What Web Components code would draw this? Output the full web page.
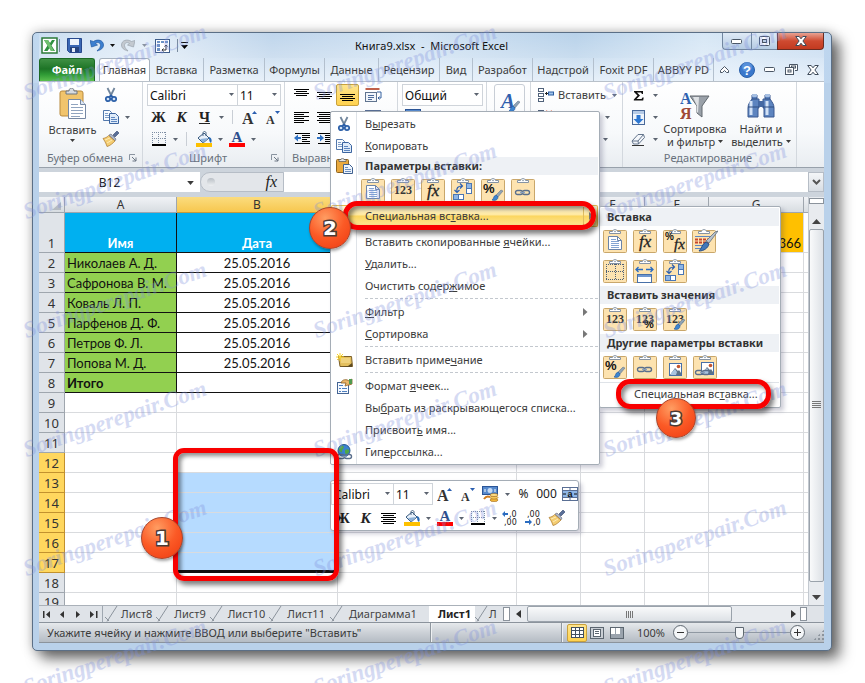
<!DOCTYPE html>
<html lang="ru">
<head>
<meta charset="utf-8">
<title>Книга9.xlsx - Microsoft Excel</title>
<style>
html{background:#fff}
body{margin:0;padding:32px 33px 32px 32px;position:relative;overflow:hidden;font:11px/16px "Noto Sans","Open Sans",sans-serif;color:#3b3b3b}
#menu{position:absolute;left:330px;top:111px;width:270px}
#paste{position:absolute;left:599px;top:206px;width:182px}
#mini{position:absolute;left:330px;top:480px;width:249px}
xl-watermark{position:absolute;inset:0}
xl-callout,xl-badge{position:absolute}
#c1{left:173px;top:448px;width:166px;height:133px}
#c2{left:343px;top:201px;width:253px;height:29px}
#c3{left:616px;top:379px;width:155px;height:30px}
#b1{left:141px;top:517px}
#b2{left:309px;top:207px}
#b3{left:656px;top:398px}
</style>
</head>
<body>
<xl-window>
  <xl-titlebar></xl-titlebar>
  <xl-tabs></xl-tabs>
  <xl-ribbon></xl-ribbon>
  <xl-formula></xl-formula>
  <xl-sheet></xl-sheet>
  <xl-sheetbar></xl-sheetbar>
  <xl-status></xl-status>
</xl-window>

<xl-mini id="mini"></xl-mini>

<xl-menu id="menu">
  <xl-item icon="cut">В<u>ы</u>резать</xl-item>
  <xl-item icon="copy"><u>К</u>опировать</xl-item>
  <xl-heading icon="paste16">Параметры вставки:</xl-heading>
  <xl-gallery gutter icons="page n123 fx transpose pctbrush chain"></xl-gallery>
  <xl-item hot arrow>Специальная вс<u>т</u>авка...</xl-item>
  <xl-rule blank></xl-rule>
  <xl-item>Вставить скопированные <u>я</u>чейки...</xl-item>
  <xl-item><u>У</u>далить...</xl-item>
  <xl-item>Очистить содер<u>ж</u>имое</xl-item>
  <xl-rule></xl-rule>
  <xl-item arrow><u>Ф</u>ильтр</xl-item>
  <xl-item arrow><u>С</u>ортировка</xl-item>
  <xl-rule></xl-rule>
  <xl-item icon="note">Вставить приме<u>ч</u>ание</xl-item>
  <xl-rule></xl-rule>
  <xl-item icon="format">Формат <u>я</u>чеек...</xl-item>
  <xl-item>Вы<u>б</u>рать из раскрывающегося списка...</xl-item>
  <xl-item>Присвоит<u>ь</u> имя...</xl-item>
  <xl-item icon="globe">Гип<u>е</u>рссылка...</xl-item>
</xl-menu>

<xl-menu id="paste" flat>
  <xl-heading flat>Вставка</xl-heading>
  <xl-gallery icons="page fx pctfx source"></xl-gallery>
  <xl-gallery icons="noborder colwidth transpose"></xl-gallery>
  <xl-heading flat>Вставить значения</xl-heading>
  <xl-gallery icons="n123 n123pct n123brush"></xl-gallery>
  <xl-heading flat>Другие параметры вставки</xl-heading>
  <xl-gallery icons="pctbrush chain pic linkpic"></xl-gallery>
  <xl-rule line></xl-rule>
  <xl-item>Специальная вс<u>т</u>авка...</xl-item>
</xl-menu>

<xl-watermark></xl-watermark>
<xl-callout id="c1" round="10"></xl-callout>
<xl-callout id="c2"></xl-callout>
<xl-callout id="c3"></xl-callout>
<xl-badge id="b1">1</xl-badge>
<xl-badge id="b2">2</xl-badge>
<xl-badge id="b3" small>3</xl-badge>

<script>
const svg=(w,h,body)=>`<svg width="${w}" height="${h}" viewBox="0 0 ${w} ${h}" aria-hidden="true">${body}</svg>`;
const lines=(rows,c='#000')=>rows.map(([x,y,w])=>`<rect x="${x}" y="${y}" width="${w}" height="1" fill="${c}" shape-rendering="crispEdges"/>`).join('');
const brush=(x,y)=>`<g transform="translate(${x} ${y})"><path d="M9 0l2 1-5 6-2-2z" fill="#8fa3b5" stroke="#5b6d80" stroke-width=".5"/><path d="M4 5l2 2c0 3-3 4-6 3 2-1 1-4 4-5z" fill="#3d85d0" stroke="#1d559d" stroke-width=".6"/></g>`;
const chain=(x,y)=>`<g transform="translate(${x} ${y})" fill="none"><rect x=".5" y=".5" width="7" height="4" rx="2" stroke="#5a6f8c" stroke-width="1.4"/><rect x="7.500" y=".5" width="7" height="4" rx="2" stroke="#5a6f8c" stroke-width="1.4"/><path d="M5 2.500h5" stroke="#8aa0bd" stroke-width="1.4"/></g>`;
const tile=b=>svg(24,24,`<rect x=".5" y="1.500" width="23" height="22" rx="1" fill="#fde3b0" stroke="#c9a76b"/><path d="M6.500 4.500v-2h3c0-2.500 5-2.500 5 0h3v2z" fill="#fff" stroke="#8593a3"/><circle cx="12" cy="2.500" r=".8" fill="#8593a3"/>${b}`);
const ser='font-family="Liberation Serif"',n123=`<text x="12" y="16" ${ser} font-weight="bold" font-size="12" text-anchor="middle" fill="#383838">123</text>`;
const fxt=(x,y,s)=>`<text x="${x}" y="${y}" ${ser} font-style="italic" font-size="${s}" fill="#222" stroke="#222" stroke-width=".3">fx</text>`;
const pct=(x,y,s=11)=>`<text x="${x}" y="${y}" font-family="Liberation Sans" font-weight="bold" font-size="${s}" fill="#111">%</text>`;
const pic=(x,y)=>`<g transform="translate(${x} ${y})"><rect x=".5" y=".5" width="12" height="12" fill="#fff" stroke="#4770a8"/><path d="M1 12l5-7 3 3 1-1 2 3v2z" fill="#5d7286"/><path d="M2 10l4-4 2 3-1 3H2z" fill="#a9c4e0"/><circle cx="9.500" cy="3.500" r="1.800" fill="#c4552d"/></g>`;
const bucket=`<path d="M2 7l6-5 5 5-6 5z" fill="#e9f1fa" stroke="#34587e"/><path d="M4 8l8-1-5 5z" fill="#8bb0d8"/><path d="M7 5V2c0-2 3-2 3 0v3" fill="none" stroke="#4a6785"/><path d="M13 6c3 1 3 4 2 6-2-1-2-4-2-6z" fill="#2869b4"/>`;
const I={
excel:svg(17,17,`<rect x="1" y="1" width="15" height="15" fill="#fff" stroke="#2b7a37" stroke-width="1.500"/><path d="M3 3h4l2 3 2-3h3L10.500 8.500 14 14h-4l-1.500-3-2 3H3l3.500-5.500z" fill="#2f9140"/><path d="M3 3h4l6 11h-3z" fill="#6fc06f"/>`),
save:svg(15,15,`<path d="M.5.5h14v14h-12l-2-2z" fill="#3a67b4" stroke="#27488c"/><rect x="3" y="1" width="9" height="6" fill="#eef4fc"/><rect x="3" y="9" width="9" height="5" fill="#26447f"/><rect x="5" y="10" width="3" height="4" fill="#e4ebf6"/>`),
undo:svg(14,13,`<path d="M0 1.500l1.500 6.500 6-2-2-1.500C8 2.500 10.500 4 10.500 6.500S8 10.500 7 12c4-1 6.500-3 6.500-6C13.500 1.500 8-.5 3.500 2.500z" fill="#3c7fd0" stroke="#2459a0" stroke-width=".7"/>`),
redo:svg(14,13,`<path d="M14 1.500l-1.500 6.500-6-2 2-1.500C6 2.500 3.500 4 3.500 6.500S6 10.500 7 12C3 11 .5 9 .5 6 .5 1.500 6-.5 10.500 2.500z" fill="#c3c9d0" stroke="#9aa4ae" stroke-width=".7"/>`),
pivot:svg(15,14,`<rect x=".5" y=".5" width="14" height="13" fill="#fff" stroke="#3e5c8a"/><path d="M2 2h3v2H2zM6 2h3v2H6zM10 2h3v2h-3zM2 5h3v3H2zM2 9h3v3H2z" fill="#6d92c6"/><path d="M7 11h4V6M9.500 7.500L11 6l1.500 1.500M8.500 9.500L7 11l1.500 1.500" fill="none" stroke="#333"/>`),
cut:svg(16,16,`<path d="M4.500 1l4 8M11.500 1l-4 8" stroke="#70859c" stroke-width="1.800"/><circle cx="5" cy="12" r="2.200" fill="#d3e4f7" stroke="#2b5fa8" stroke-width="1.700"/><circle cx="11" cy="12" r="2.200" fill="#d3e4f7" stroke="#2b5fa8" stroke-width="1.700"/><path d="M8 8l-2 2.500M8 8l2 2.500" stroke="#2b5fa8" stroke-width="1.600"/>`),
copy:svg(16,14,`<path d="M.5.5h6l2 2v8h-8z" fill="#f7fbff" stroke="#5378ac"/><path d="M2 3.500h3M2 5.500h5M2 7.500h5" stroke="#7e9dc8"/><path d="M6.500 3.500h6l3 3v7h-9z" fill="#dfebf9" stroke="#3c65a0"/><path d="M8 7.500h4M8 9.500h6M8 11.500h6" stroke="#5d86c0"/>`),
brush:svg(17,16,`<path d="M11 4l4-4 2 2-4 4z" fill="#5a6f97" stroke="#32466e" stroke-width=".6"/><path d="M7 4l2-1 5 5-1 2z" fill="#aab6c8" stroke="#667" stroke-width=".6"/><path d="M6.500 4.500L13 10c-2 2-5 5-8 5.500C4 12 2 9 1 7.500c2-.5 4-1 5.500-3z" fill="#f4cd71" stroke="#a9772c" stroke-width=".7"/><path d="M3 9l5-2M5 12l5-3" stroke="#fdeab6"/>`),
paste:svg(28,32,`<rect x="1" y="3" width="23" height="25" rx="2" fill="#f1c46c" stroke="#b98a3c"/><path d="M7 6V3h3c0-4 5-4 5 0h3v3z" fill="#d7dbe0" stroke="#6d757f"/><path d="M9.500 11.500h12l5 5v14h-17z" fill="#fff" stroke="#7688a3"/><path d="M21.500 11.500v5h5" fill="#dce6f3" stroke="#7688a3"/><path d="M12 16.500h7M12 19.500h12M12 22.500h12M12 25.500h12M12 28.500h9" stroke="#90a4bf"/>`),
paste16:svg(17,16,`<rect x=".5" y="1.500" width="12" height="13" rx="1" fill="#e9a93e" stroke="#8e6420"/><path d="M3 3.500h7v-2H8c0-1.500-3-1.500-3 0H3z" fill="#e3e3e3" stroke="#555" stroke-width=".7"/><path d="M7.500 6.500h6l3 3v6h-9z" fill="#eef4fc" stroke="#40618f"/><path d="M9 9.500h3M9 11.500h6M9 13.500h6" stroke="#6c8fc0"/>`),
border:svg(14,14,`<path d="M0 .5h14M0 6.500h14M.5 0v13M6.500 0v13M13.500 0v13" stroke="#7d8da3" stroke-dasharray="1 1" fill="none"/><path d="M0 13h14" stroke="#000" stroke-width="2"/>`),
fill:svg(16,16,`${bucket}<rect y="12" width="16" height="4" fill="#fdc000"/>`),
color:svg(16,16,`<text x="8" y="11" ${ser} font-weight="bold" font-size="15" text-anchor="middle" fill="#2d4f8e">A</text><rect y="12" width="16" height="4" fill="#f00"/>`),
big:svg(15,15,`<text x="0" y="14" ${ser} font-weight="bold" font-size="16" fill="#333">A</text><path d="M10 4l2.500-3L15 4z" fill="#2b5fb0"/>`),
small:svg(15,15,`<text x="1" y="14" ${ser} font-weight="bold" font-size="12" fill="#333">A</text><path d="M10 1h5l-2.500 3z" fill="#2b5fb0"/>`),
alTop:svg(15,14,lines([[0,1,15],[2,3,11],[0,5,15],[2,7,11]])),
alMid:svg(15,14,lines([[0,4,15],[2,6,11],[0,8,15],[2,10,11]])),
alBot:svg(15,14,lines([[0,6,15],[2,8,11],[0,10,15],[2,12,11]])),
alLeft:svg(15,14,lines([[0,2,15],[0,4,10],[0,6,15],[0,8,10],[0,10,15],[0,12,10]])),
alCen:svg(15,14,lines([[0,2,15],[2,4,11],[0,6,15],[2,8,11],[0,10,15],[2,12,11]])),
inL:svg(16,14,lines([[1,1,15],[8,3,8],[8,5,8],[8,7,5],[8,9,8],[1,11,15]])+`<path d="M0 6l4-3.500V5h3v2H4v2.500z" fill="#3173c4"/>`),
inR:svg(16,14,lines([[1,1,15],[8,3,8],[8,5,8],[8,7,5],[8,9,8],[1,11,15]])+`<path d="M7 6L3 2.500V5H0v2h3v2.500z" fill="#3173c4"/>`),
wrap:svg(17,16,`<rect x=".5" y="1" width="14" height="2" fill="#c0604a"/><rect x=".5" y="5.500" width="11" height="9" fill="#f1f5fa" stroke="#60748f"/><path d="M3 8.500h6M3 10.500h6M3 12.500h4" stroke="#4d6c9b"/><path d="M12 5h4v6h-3M14.500 9.500L13 11l1.500 1.500" fill="none" stroke="#34619f"/>`),
merge:svg(16,14,`<rect x=".5" y=".5" width="15" height="13" fill="#fff" stroke="#5a6f94"/><rect x="1" y="4" width="14" height="6" fill="#8db5e6"/><path d="M.5 3.500h15M.5 10.500h15M8 0v3.500M8 10.500V14" stroke="#5a6f94"/><text x="8" y="10" text-anchor="middle" font-family="Liberation Sans" font-weight="bold" font-size="9" fill="#111">a</text><path d="M1 7h3M12 7h3" stroke="#111"/>`),
money:svg(17,16,`<rect x=".5" y=".5" width="15" height="8" fill="#5689cc" stroke="#2b5597"/><circle cx="8" cy="4.500" r="2.500" fill="#c3daf6"/><path d="M3 3v3M13 3v3" stroke="#fff"/><ellipse cx="12" cy="14" rx="4" ry="1.600" fill="#f5b93c" stroke="#9c6416" stroke-width=".6"/><ellipse cx="12" cy="11.500" rx="4" ry="1.600" fill="#f8c85a" stroke="#9c6416" stroke-width=".6"/><ellipse cx="12" cy="9" rx="4" ry="1.600" fill="#fddb83" stroke="#9c6416" stroke-width=".6"/><path d="M2 13c2-3 4-3 6-2" stroke="#cf7b1e" stroke-width="2" fill="none"/>`),
styles:svg(20,22,`<text x="1" y="18" ${ser} font-style="italic" font-weight="bold" font-size="21" fill="#2f5fae">A</text>${brush(9,11)}`),
insert:svg(16,14,`<rect x=".5" y=".5" width="5" height="3" fill="#fff" stroke="#50627a"/><rect x=".5" y="5.500" width="5" height="3" fill="#fff" stroke="#50627a"/><rect x=".5" y="10.500" width="5" height="3" fill="#fff" stroke="#50627a"/><path d="M7 5.500h3M8.500 4v3" stroke="#222"/><rect x="10.500" y="4" width="5" height="3" fill="#9fc3ea" stroke="#2a5da0"/>`),
del:svg(16,14,`<rect x=".5" y=".5" width="5" height="3" fill="#fff" stroke="#50627a"/><rect x=".5" y="5.500" width="5" height="3" fill="#fff" stroke="#50627a"/><path d="M8 1l6 6M14 1L8 7" stroke="#d9542b" stroke-width="2"/>`),
sigma:svg(12,11,`<path d="M1 1h9v3H9L8 2.500H4L7 5.500 3.500 9H8.500l1-1.500h1.200L10.200 10.500H.8v-1L4.500 5.600 1 2z" fill="#111"/>`),
down:svg(13,15,`<rect x=".5" y=".5" width="12" height="14" fill="#eef4fb" stroke="#49699a"/><rect x="1" y="1" width="11" height="3" fill="#b6cbe6"/><path d="M4.500 5h4v4h3l-5 5-5-5h3z" fill="#2d77d1"/>`),
eraser:svg(15,13,`<path d="M7 1.500h5.500l1 3-6 6.500H2.500L1 8z" fill="#f4f7fb" stroke="#64758c"/><path d="M1 8h6l.5 3M7 8l5.500-6.500" fill="none" stroke="#64758c"/><path d="M1 12.500h12" stroke="#333"/>`),
sort:svg(30,30,`<text x="0" y="13" ${ser} font-weight="bold" font-size="16" fill="#2f62b0">А</text><text x="0" y="28" ${ser} font-weight="bold" font-size="16" fill="#a04a37">Я</text><path d="M10 5h19l-7 10v11l-5-4v-7z" fill="#9aa1a9" stroke="#62696f"/><path d="M13 6h6l-1 16-1-1v-6z" fill="#dfe2e5"/>`),
find:svg(30,26,`<path d="M6 2h5v4h2v9h-1v9H2v-9c0-4 2-6 4-9zM24 2h-5v4h-2v9h1v9h10v-9c0-4-2-6-4-9z" fill="#5d84bf" stroke="#3a5890"/><rect x="12" y="8" width="6" height="6" fill="#4569a3"/><path d="M5 8v14M21 8v14" stroke="#d3e2f6" stroke-width="3"/><path d="M2 14h11M17 14h11M6 6h5M19 6h5" stroke="#2f4d80"/><rect x="6" y="1" width="5" height="3" rx="1" fill="#a6bfe2"/><rect x="19" y="1" width="5" height="3" rx="1" fill="#a6bfe2"/>`),
up:svg(11,9,`<path d="M1.500 7.500v-2l4-4 4 4v2h-2l-2-2-2 2z" fill="#fff" stroke="#4a5665"/>`),
help:svg(16,16,`<circle cx="8" cy="8" r="7.500" fill="#3a78cc" stroke="#2a5fa8"/><circle cx="8" cy="5" r="5" fill="#6aa0e4" opacity=".6"/><text x="8" y="12.500" text-anchor="middle" font-family="Liberation Sans" font-weight="bold" font-size="13" fill="#fff">?</text>`),
min:svg(12,5,`<rect x=".5" y=".5" width="10" height="4" rx="1" fill="#fff" stroke="#4a5665"/>`),
rest:svg(13,11,`<path d="M4.500 3V.5h8v6H10" fill="#fff" stroke="#4a5665"/><rect x="6.500" y="2" width="4" height="2" fill="none" stroke="#4a5665"/><rect x=".5" y="3.500" width="8" height="7" fill="#fff" stroke="#4a5665"/><rect x="3" y="6" width="3" height="2" fill="none" stroke="#4a5665"/>`),
x:svg(12,10,`<path d="M.7.500h3.500L6 2.800 7.800.5h3.500L7.900 5l3.400 4.500H7.800L6 7.200 4.200 9.500H.7L4.100 5z" fill="#fff" stroke="#3f4b5a"/>`),
max:svg(12,10,`<rect x=".5" y=".5" width="10" height="9" rx="1" fill="#fff" stroke="#445062"/><rect x="3.500" y="3.500" width="4" height="3" fill="#b9cce4" stroke="#445062"/>`),
note:svg(17,15,`<path d="M2.500 3.500h13l1 10H4z" fill="#e3bf5e" stroke="#7c6029"/><path d="M12 13l4-3v4H4z" fill="#5c4a22"/><path d="M4 0v8M0 4h8M1 1l6 6M7 1L1 7" stroke="#f9d32c"/><path d="M5 5h9v5H5z" fill="#efd27e"/>`),
format:svg(17,16,`<rect x="1.500" y="4.500" width="11" height="11" fill="#f7faff" stroke="#456594"/><path d="M3 7.500h4M3 10.500h2M6 10.500h5M3 13.500h2M6 13.500h5" stroke="#4d7fc0"/><path d="M5 5c1-4 6-4 8-2l3-2v5l-3 1c-2 0-3 1-4 1l1-3z" fill="#e9b56b" stroke="#8b5c1f" stroke-width=".8"/><path d="M13 1h3v5h-3z" fill="#4f9a4f"/>`),
globe:svg(17,16,`<circle cx="8" cy="6.500" r="6" fill="#3b82cf" stroke="#24588f"/><path d="M4 3c3-3 5 0 3 2s0 4-2 3-3-3-1-5zM9 6c3-2 5 0 4 2s-3 3-4 1z" fill="#4fa845"/>${chain(1,10)}`),
launch:svg(8,8,`<path d="M.5 6V.5H6" fill="none" stroke="#8a94a0"/><path d="M3 3l4 4M7 3.500V7H3.500" fill="none" stroke="#6c7784"/>`),
page:tile(`<path d="M5.500 7.500h9l4 4v9h-13z" fill="#fff" stroke="#6b84a8"/><path d="M14.500 7.500v4h4" fill="none" stroke="#6b84a8"/><path d="M8 10.500h5M8 12.500h8M8 14.500h8M8 16.500h8M8 18.500h8" stroke="#84a5d2"/>`),
n123:tile(n123),n123pct:tile(n123+pct(11,21,11)),n123brush:tile(n123+brush(11,12)),
fx:tile(fxt(6,18,17)),pctfx:tile(pct(2,11,10)+fxt(11,20,15)),
transpose:tile(`<rect x="15.500" y="5.500" width="5" height="5" fill="#8db5e6" stroke="#4a76b4"/><rect x="15.500" y="10.500" width="5" height="5" fill="#fff" stroke="#4a76b4"/><rect x="2.500" y="16.500" width="5" height="5" fill="#8db5e6" stroke="#4a76b4"/><rect x="7.500" y="16.500" width="5" height="5" fill="#fff" stroke="#4a76b4"/><path d="M6 14c-1-4 1-6 5-6M9 5.500L11.500 8 9 10.500M3.500 12L6 14.500 8.500 12" fill="none" stroke="#2b5fb0" stroke-width="1.200"/>`),
pctbrush:tile(pct(2,15,13)+brush(11,12)),
chain:tile(chain(4,12)),
source:svg(26,24,`<rect x=".5" y="1.500" width="23" height="22" rx="1" fill="#fde3b0" stroke="#c9a76b"/><path d="M6.500 4.500v-2h3c0-2.500 5-2.500 5 0h3v2z" fill="#fff" stroke="#8593a3"/><path d="M3 7.500h16M3 16.500h8M3 19.500h8" stroke="#5d86c0"/><path d="M3 10.500h16M3 13.500h14" stroke="#c7462b" stroke-width="2" stroke-dasharray="3 1"/><path d="M23 3l3-1-9 12-3-2z" fill="#b9c2cc" stroke="#5f6d7c" stroke-width=".8"/><path d="M14 13l3 2c-1 4-5 7-10 7 3-3 3-7 7-9z" fill="#4277b9" stroke="#274f86"/>`),
noborder:tile(`<path d="M3.500 5v15M12.500 5v15M20.500 5v15M3 5.500h18M3 12.500h18M3 20.500h18" stroke="#4d6078" stroke-dasharray="1 1" fill="none"/>`),
colwidth:tile(`<path d="M3 10.500h7M13 10.500h7M5.500 8L3 10.500 5.500 13M17.500 8l2.500 2.500-2.500 2.500" fill="none" stroke="#2b6cc0" stroke-width="1.300"/><rect x="4.500" y="15.500" width="14" height="8" fill="#fff" stroke="#4770a8"/><rect x="5" y="16" width="13" height="2" fill="#6e96cf"/>`),
pic:tile(pic(6,8)),linkpic:tile(pic(8,7)+chain(2,15)),
grid:svg(13,11,`<rect x=".5" y=".5" width="12" height="10" fill="#fff" stroke="#42505f"/><path d="M0 3.500h13M0 7.500h13M4.500 0v11M8.500 0v11" stroke="#42505f"/>`),
layout:svg(14,12,`<rect x=".5" y=".5" width="13" height="11" fill="#c9ced4" stroke="#5c6670"/><rect x="3.500" y="2.500" width="7" height="7" fill="#fff" stroke="#5c6670"/><path d="M5 4.500h4M5 6.500h4" stroke="#5c6670"/>`),
breaks:svg(14,12,`<rect x=".5" y=".5" width="13" height="11" fill="#9aa3ad" stroke="#5c6670"/><path d="M1 1h4v6H1zM6 1h4v6H6z" fill="#fff"/>`),
dec1:svg(17,16,`<text x="7" y="7" font-family="DejaVu Sans" font-size="8" fill="#222">,0</text><text x="2" y="15" font-family="DejaVu Sans" font-size="8" fill="#222">,00</text><path d="M0 4l3-3v2h3v2H3v2z" fill="#2b6cc0"/>`),
dec2:svg(17,16,`<text x="2" y="7" font-family="DejaVu Sans" font-size="8" fill="#222">,00</text><text x="8" y="15" font-family="DejaVu Sans" font-size="8" fill="#222">,0</text><path d="M7 12l-3-3v2H0v2h4v2z" fill="#2b6cc0"/>`)
};
const define=(name,html,init)=>{
  const t=document.createElement('template');t.innerHTML=html;
  customElements.define(name,class extends HTMLElement{
    constructor(){super();this.attachShadow({mode:'open'}).append(t.content.cloneNode(true))}
    connectedCallback(){if(init&&!this.ready){this.ready=true;init(this,this.shadowRoot)}}
  });
};
const arrow='<svg width="5" height="3" viewBox="0 0 5 3" aria-hidden="true"><path d="M0 0h5L2.500 3z" fill="currentColor"/></svg>';
const base=':host,*{box-sizing:border-box}button{font:inherit;color:inherit;background:none;border:0;padding:0;margin:0}svg{display:block;flex:none}';

define('xl-tool',`<style>${base}:host{display:flex;width:23px;height:22px}button{flex:1;display:grid;place-items:center;border-radius:2px}
:host([on]) button{background:linear-gradient(#ffe58c,#ffd24f);border:1px solid #c9a13b}
:host([drop]){width:10px;color:#5c6470}</style><button type="button"><slot></slot></button>`,(el,r)=>{
  const b=r.querySelector('button'),n=el.getAttribute('icon');
  if(el.getAttribute('label'))b.setAttribute('aria-label',el.getAttribute('label'));
  if(n)b.innerHTML=I[n];else if(el.hasAttribute('drop')){b.innerHTML=arrow;b.setAttribute('aria-label','Ещё')}});

define('xl-combo',`<style>${base}:host{display:block;position:relative;height:22px}
select{appearance:none;width:100%;height:100%;border:1px solid #cfd4da;border-left-width:var(--edge,1px);background:#fff;font:12px "Noto Sans",sans-serif;color:#111;padding:0 2px;border-radius:0}
svg{position:absolute;right:4px;top:9px;color:#5c6470}</style><select></select>${arrow}`,(el,r)=>{
  const s=r.querySelector('select');s.setAttribute('aria-label',el.getAttribute('label'));s.innerHTML='<option>'+el.getAttribute('value')+'</option>'});

define('xl-window',`<style>:host{display:block;box-sizing:border-box;border:1px solid #5b6f86;border-radius:5px;padding:0 7px 7px 6px;
background:#b9d1ea linear-gradient(90deg,#bfd7ee,#dce9f6 14%,#b4cee8 30%,#c8ddf1 48%,#accae6 68%,#d0e3f4 84%,#bdd5ee) 0 0/100% 50px no-repeat;
box-shadow:0 0 12px rgba(0,0,0,.25),8px 8px 14px rgba(0,0,0,.55)}</style><slot></slot>`);

define('xl-titlebar',`<style>${base}:host{display:flex;height:25px;align-items:center;background:linear-gradient(180deg,rgba(255,255,255,.15),rgba(255,255,255,.35))}
.q{display:flex;align-items:center;flex:1 1 0;color:#111}.q button{height:20px;display:grid;place-items:center}.s{width:1px;height:13px;background:#7a8b9f}
h1{margin:0;font:11px "Noto Sans",sans-serif;color:#111;white-space:pre}
.w{flex:1 1 0;display:flex;justify-content:flex-end;align-self:flex-start}
.w button{height:17px;display:grid;place-items:center;border:1px solid #71869f;border-top:0;background:linear-gradient(#dfeaf6,#b5cbe3)}
.w button:nth-child(1){width:29px;border-radius:0 0 0 4px;border-right:0}.w button:nth-child(2){width:26px;border-right:0}
.w .c{width:47px;background:linear-gradient(#e8a292,#cf4a30 50%,#c23a20);border-color:#6b2b20;border-radius:0 0 4px 0}
</style><div class="q"><button aria-label="Excel" style="width:20px">${I.excel}</button><span class="s"></span>
<button aria-label="Сохранить" style="width:29px">${I.save}</button><button aria-label="Отменить" style="width:16px">${I.undo}</button><button aria-label="Список отмены" style="width:14px">${arrow}</button>
<button aria-label="Вернуть" style="width:18px">${I.redo}</button><button aria-label="Список возврата" style="width:14px;color:#8a94a0">${arrow}</button><button aria-label="Сводная таблица" style="width:22px">${I.pivot}</button><span class="s" style="margin-left:4px"></span><button aria-label="Настройка панели" style="width:13px"><svg width="7" height="7" viewBox="0 0 7 7"><path d="M0 .5h7" stroke="#111"/><path d="M0 3h7L3.500 7z"/></svg></button></div>
<h1>Книга9.xlsx  -  Microsoft Excel</h1>
<div class="w"><button aria-label="Свернуть">${I.min}</button><button aria-label="Развернуть">${I.max}</button><button class="c" aria-label="Закрыть">${I.x}</button></div>`);

define('xl-tabs',`<style>${base}:host{display:grid;grid-template-columns:56px 4px 51px 54px 61px 60px 54px 61px 33px 60px 61px 60px 60px 1fr;height:23px;background:linear-gradient(rgba(240,246,252,.5),rgba(240,246,252,.85))}
button.t{overflow:hidden;white-space:nowrap;border-right:1px solid #b3c0ce;text-align:center}
button.f{background:linear-gradient(#3f9044,#1d7426 45%,#2f9a35 70%,#5abf4e);color:#fff;font-weight:bold;border:1px solid #1c6a25;border-bottom:0;border-radius:3px 3px 0 0}
button.a{background:#fff;border:1px solid #a7b2be;border-bottom:0;border-radius:3px 3px 0 0}
.r{display:flex;justify-content:flex-end;align-items:center;gap:9px;padding-right:5px}
</style><button class="f">Файл</button><i></i><button class="t a">Главная</button><button class="t">Вставка</button><button class="t">Разметка</button><button class="t">Формулы</button><button class="t">Данные</button><button class="t">Рецензир</button><button class="t">Вид</button><button class="t">Разработ</button><button class="t">Надстрой</button><button class="t">Foxit PDF</button><button class="t">ABBYY PD</button>
<div class="r"><button aria-label="Свернуть ленту">${I.up}</button><button aria-label="Справка">${I.help}</button><button aria-label="Свернуть книгу">${I.min}</button><button aria-label="Восстановить книгу">${I.rest}</button><button aria-label="Закрыть книгу">${I.x}</button></div>`);

define('xl-group',`<style>:host{box-sizing:border-box;display:grid;grid-template-rows:66px 16px;padding-top:2px;border-right:1px solid #d3d8de;overflow:hidden;flex:none}svg{display:block}
.c{display:flex;align-items:center;color:#68717c;white-space:nowrap;padding:0 5px 0 2px}.c span{flex:1;text-align:center}:host([start]) .c span{text-align:left;padding-left:5px}
</style><slot></slot><div class="c"><span></span></div>`,(el,r)=>{const c=r.querySelector('.c');c.firstChild.textContent=el.getAttribute('caption')||'';
  if(el.hasAttribute('launcher'))c.insertAdjacentHTML('beforeend',I.launch)});

define('xl-ribbon',`<style>${base}:host{display:flex;height:87px;background:linear-gradient(#fff,#f7f9fb 60%,#e9edf1);border-top:1px solid #b9c1ca;border-bottom:1px solid #98a1ab}
.b{display:flex}.rows{display:grid;grid-auto-rows:22px;align-content:start}.rows>div{display:flex;white-space:nowrap;align-items:center}
.big{display:grid;grid-template-rows:32px auto auto;justify-items:center;align-content:start;align-items:center;line-height:13px;row-gap:3px;padding-top:4px;white-space:nowrap;color:#3b3b3b}
.big.two{row-gap:0;padding-top:6px}.big span{display:flex;align-items:center;gap:3px}.i{width:12px;height:14px;background:linear-gradient(#c9ced5,#c9ced5) center/1px 100% no-repeat}
b{font:bold 15px "Liberation Serif",serif;color:#222}
.st{border:1px solid #c8ced6;border-radius:3px;width:31px;height:44px;margin-left:7px;display:grid;place-items:start center;padding-top:5px}
</style>
<xl-group caption="Буфер обмена" launcher style="width:104px"><div class="b" style="padding-left:7px"><button class="big" style="width:53px">${I.paste}<span>Вставить</span>${arrow}</button>
<div class="rows"><div><xl-tool icon="cut" label="Вырезать"></xl-tool></div><div><xl-tool icon="copy" label="Копировать"></xl-tool><xl-tool drop></xl-tool></div><div><xl-tool icon="brush" label="Формат по образцу"></xl-tool></div></div></div></xl-group>
<xl-group caption="Шрифт" launcher style="width:142px"><div class="rows" style="padding-left:4px"><div><xl-combo label="Шрифт" value="Calibri" style="width:91px"></xl-combo><xl-combo label="Размер" value="11" style="width:43px;--edge:0"></xl-combo></div>
<div><xl-tool><b>Ж</b></xl-tool><xl-tool><b style="font-style:italic">К</b></xl-tool><xl-tool><b style="text-decoration:underline">Ч</b></xl-tool><xl-tool drop></xl-tool><i class="i"></i><xl-tool icon="big" label="Увеличить размер"></xl-tool><xl-tool icon="small" label="Уменьшить размер"></xl-tool></div>
<div><xl-tool icon="border" label="Границы"></xl-tool><xl-tool drop></xl-tool><i class="i"></i><xl-tool icon="fill" label="Заливка"></xl-tool><xl-tool drop></xl-tool><xl-tool icon="color" label="Цвет текста"></xl-tool><xl-tool drop></xl-tool></div></div></xl-group>
<xl-group caption="Выравнивание" start style="width:113px"><div class="rows" style="padding-left:5px"><div><xl-tool icon="alTop" label="По верхнему краю"></xl-tool><xl-tool icon="alMid" label="По середине"></xl-tool><xl-tool on icon="alBot" label="По нижнему краю"></xl-tool><xl-tool icon="wrap" label="Перенос текста" style="width:28px"></xl-tool></div>
<div><xl-tool icon="alLeft" label="Слева"></xl-tool><xl-tool icon="alCen" label="По центру"></xl-tool><xl-tool icon="alCen" label="Справа"></xl-tool><xl-tool icon="merge" label="Объединить" style="width:28px"></xl-tool></div>
<div><xl-tool icon="inL" label="Уменьшить отступ"></xl-tool><xl-tool icon="inR" label="Увеличить отступ"></xl-tool></div></div></xl-group>
<xl-group style="width:89px"><div class="rows" style="padding-left:4px"><div><xl-combo label="Числовой формат" value="Общий" style="width:81px"></xl-combo></div><div><xl-tool icon="money" label="Денежный"></xl-tool></div></div></xl-group>
<xl-group style="width:44px"><div class="b"><button class="st" aria-label="Стили">${I.styles}</button></div></xl-group>
<xl-group style="width:92px"><div class="rows" style="padding-left:7px"><div>${I.insert}<span style="padding:0 4px">Вставить</span><xl-tool drop></xl-tool></div><div>${I.del}<i style="width:48px"></i><xl-tool drop></xl-tool></div><div><i style="width:62px"></i><xl-tool drop></xl-tool></div></div></xl-group>
<xl-group caption="Редактирование" style="width:174px"><div class="b" style="padding-left:4px"><div class="rows"><div><xl-tool icon="sigma" label="Сумма"></xl-tool><xl-tool drop></xl-tool></div><div><xl-tool icon="down" label="Заполнить"></xl-tool><xl-tool drop></xl-tool></div><div><xl-tool icon="eraser" label="Очистить"></xl-tool><xl-tool drop></xl-tool></div></div>
<button class="big two" style="width:70px">${I.sort}<span>Сортировка</span><span>и фильтр ${arrow}</span></button><button class="big two" style="width:62px">${I.find}<span>Найти и</span><span>выделить ${arrow}</span></button></div></xl-group>`);

define('xl-formula',`<style>${base}:host{display:grid;grid-template-columns:161px 84px 1fr 16px;grid-template-rows:1fr;height:29px;padding:4px 0 5px;background:#cdd4dc}
.n{display:block;background:#fff;border:0;text-align:center;font:12px "Noto Sans",sans-serif;color:#111;width:100%;height:100%;padding:0 20px 0 0}.nb{position:relative;background:#fff}.nb svg{position:absolute;right:6px;top:9px;width:7px;height:4px}
.f{background:#e3e6ea;border:1px solid #b6bdc6;border-radius:10px 0 0 10px;display:flex;justify-content:space-between;align-items:center;padding:0 6px}
.f i{width:8px;height:8px;border-radius:4px;background:linear-gradient(#b9bfc6,#eef0f2)}.f b{font:italic 16px/16px "Liberation Serif",serif;color:#222}
.v{border:0;background:#fff;width:100%;min-width:0}.e{background:linear-gradient(#f4f6f8,#d8dde3);border:1px solid #b6bdc6;display:grid;place-items:center}
</style><div class="nb"><input class="n" aria-label="Имя" value="B12">${arrow}</div><div class="f"><i></i><b>fx</b></div><input class="v" aria-label="Формула"><button class="e" aria-label="Развернуть"><svg width="9" height="6" viewBox="0 0 9 6"><path d="M1 1l3.500 3.500L8 1" stroke="#555" stroke-width="2" fill="none"/></svg></button>`);

define('xl-sheet',`<style>${base}:host{display:grid;grid-template-columns:1fr 16px;background:#fff}
table{border-collapse:separate;border-spacing:0;table-layout:fixed;width:100%;color:#111}
th,td{height:20px;padding:0 2px;border:solid #d9dbde;border-width:0 1px 1px 0;font:13px/18px Lato,"Noto Sans",sans-serif;overflow:hidden;white-space:nowrap;text-align:left}
th{background:#e0e4e9;color:#333;font:13px/18px "Noto Sans",sans-serif;text-align:center;border-color:#9fa6ae}
thead th{height:16px;line-height:14px;font-size:12px;background:linear-gradient(#f1f3f6,#d7dce1)}thead th.s{background:linear-gradient(#fbdc7e,#f7c74e);border-color:#c49a3a}
thead th.f,td.f{border-right:0}
tr.h>*{height:40px;vertical-align:bottom}tr.h td.n,tr.h td.d{background:#00b0f0;color:#fff;font-weight:bold;text-align:center;border-color:#111}
tr.h td.g{background:#ffc000;text-align:right}.n{background:#92d050}.n,.d{border-color:#111}.d{text-align:center}tr.t .n{font-weight:bold}
th.s{background:#ffd75e;border-color:#c2912e}.p{background:#b6dbff}.k{border-right:2px solid #111}.top{border-bottom-color:#111}.last{border-bottom:3px solid #111}
tr.z>*{height:12px;line-height:12px;vertical-align:top;border-bottom:0}tr.z div{height:12px;overflow:hidden;line-height:18px}
.v{display:grid;grid-template-rows:16px 16px 1fr 16px;background:#e8ebef;border-left:1px solid #c3c9d0}.v button{display:grid;place-items:center}
.v .th{background:linear-gradient(90deg,#f9fafb,#dde1e6);border:1px solid #9aa2ab;border-radius:2px}.sp{border:1px solid #8b939c;background:#fff;margin:1px 0 9px}
.tr{display:grid;grid-template-rows:352fr 7fr}
</style><table><colgroup><col style="width:26px"><col style="width:112px"><col style="width:161px"><col style="width:179px"><col style="width:64px"><col style="width:64px"><col style="width:64px"><col style="width:95px"><col></colgroup><thead></thead><tbody></tbody></table>
<div class="v"><i class="sp"></i><button aria-label="Вверх"><svg width="9" height="5" viewBox="0 0 9 5"><path d="M0 5h9L4.500 0z" fill="#444"/></svg></button><div class="tr"><button class="th" aria-label="Прокрутка"><svg width="9" height="8" viewBox="0 0 9 8"><path d="M0 .5h9M0 2.500h9M0 4.500h9M0 6.500h9" stroke="#777"/></svg></button></div><button aria-label="Вниз"><svg width="9" height="5" viewBox="0 0 9 5"><path d="M0 0h9L4.500 5z" fill="#444"/></svg></button></div>`,(el,r)=>{
  r.querySelector('thead').innerHTML='<tr><th><svg width="22" height="12"><path d="M20 3v8H11z" fill="#b5bbc2"/></svg></th>'+'ABCDEFG'.split('').map(c=>`<th${c=='B'?' class="s"':''}>${c}</th>`).join('')+'<th class="f"></th></tr>';
  const names=['Имя','Николаев А. Д.','Сафронова В. М.','Коваль Л. П.','Парфенов Д. Ф.','Петров Ф. Л.','Попова М. Д.','Итого'];let h='';
  for(let i=1;i<=19;i++){const d=i<=8,sel=i>=12&&i<=17;let b='';
    if(d)b='d';else if(i==11)b='top';else if(sel)b=(i>12?'p ':'')+'k'+(i==17?' last':'');
    h+=`<tr class="${i==1?'h':i==8?'t':i==19?'z':''}"><th${sel?' class="s"':''}><div>${i}</div></th><td class="${d?'n':''}">${d?names[i-1]:''}</td><td class="${b}">${i==1?'Дата':i<8?'25.05.2016':''}</td><td></td><td></td><td></td><td></td><td class="g">${i==1?'366':''}</td><td class="f"></td></tr>`}
  r.querySelector('tbody').innerHTML=h});

define('xl-sheetbar',`<style>${base}:host{display:flex;height:17px;background:#dfe3e8;border-top:1px solid #aab1b9}
.n{display:flex;width:64px;border-right:1px solid #9fa7b0}.n button{flex:1;display:grid;place-items:center}
.t{display:flex;flex:none;width:400px;overflow:hidden}.t button{display:flex;white-space:nowrap;align-items:center;color:#444;flex:none}
.t button:nth-child(5){padding-right:12px}.t .a{background:#fff;font-weight:bold;color:#222;padding:0 4px 0 9px}.t .a svg{display:none}
.sp{width:7px;border:1px solid #8b939c;background:#fff;margin:1px 0}.s{flex:1;display:grid;grid-template-columns:17px 205fr 54fr 14px;background:#e8ebef}
.s button{display:grid;place-items:center}.th{background:linear-gradient(#f9fafb,#dde1e6);border:1px solid #9aa2ab;border-radius:2px}
.e{width:17px}
</style><div class="n"><button aria-label="Первый"><svg width="8" height="7" viewBox="0 0 8 7"><path d="M0 0h1.500v7H0zM7 0v7L3 3.500z" fill="#333"/></svg></button><button aria-label="Назад"><svg width="5" height="7" viewBox="0 0 5 7"><path d="M4 0v7L0 3.500z" fill="#333"/></svg></button><button aria-label="Вперёд"><svg width="5" height="7" viewBox="0 0 5 7"><path d="M0 0v7l4-3.500z" fill="#333"/></svg></button><button aria-label="Последний"><svg width="8" height="7" viewBox="0 0 8 7"><path d="M6 0h1.500v7H6zM0 0v7l4-3.500z" fill="#333"/></svg></button></div>
<div class="t"></div><i class="sp"></i><div class="s"><button aria-label="Влево"><svg width="5" height="8" viewBox="0 0 5 8"><path d="M5 0v8L0 4z" fill="#333"/></svg></button><button class="th" aria-label="Прокрутка"><svg width="8" height="7" viewBox="0 0 8 7"><path d="M.5 0v7M2.500 0v7M4.500 0v7M6.500 0v7" stroke="#777"/></svg></button><i></i><button aria-label="Вправо"><svg width="5" height="8" viewBox="0 0 5 8"><path d="M0 0v8l5-4z" fill="#333"/></svg></button></div><i class="sp"></i><i class="e"></i>`,(el,r)=>{
  const gaps=[18,22,22,22,24,0,14];
  r.querySelector('.t').innerHTML=['Лист8','Лист9','Лист10','Лист11','Диаграмма1','Лист1','Л'].map((t,i)=>`<button${i==5?' class="a"':''}><svg width="${gaps[i]}" height="16" viewBox="0 0 14 16"><path d="M2 15.500L12 0" stroke="#8b939c" fill="none"/><path d="M0 11l4 4" stroke="#8b939c"/></svg>${t}</button>`).join('')});

define('xl-status',`<style>${base}:host{display:flex;height:21px;align-items:center;background:linear-gradient(#e6e9ec,#ccd1d7 50%,#b5bcc4);border-top:1px solid #8b939c;border-bottom:1px solid #8b939c}
.m{flex:none;width:391px;padding-left:8px;white-space:nowrap}.l{width:2px;align-self:stretch;border-left:1px solid #8f979f;border-right:1px solid #eef0f2}
.g{flex:1}.v{display:flex;align-items:center;padding-left:4px}.v button{width:20px;height:18px;display:grid;place-items:center}.v .o{background:linear-gradient(#ffe58c,#ffd24f);border:1px solid #c9a13b;border-radius:2px}
.z{width:38px;text-align:right;margin-right:8px}.c{width:15px;height:15px;border:1px solid #5f6871;border-radius:8px;background:#f4f6f8;display:grid;place-items:center}
input{appearance:none;width:102px;height:14px;margin:0;background:linear-gradient(#8f98a2,#8f98a2) center/100% 1px no-repeat}
input::-webkit-slider-thumb{appearance:none;width:9px;height:12px;background:#f4f6f8;border:1px solid #5f6871;border-radius:1px 1px 5px 5px}
.r{width:19px;height:19px;background:conic-gradient(#8b939c 25%,transparent 0) right bottom/4px 4px;clip-path:polygon(100% 35%,100% 100%,35% 100%)}
</style><span class="m">Укажите ячейку и нажмите ВВОД или выберите "Вставить"</span><i class="l"></i><i class="g"></i><i class="l"></i><div class="v"><button class="o" aria-label="Обычный">${I.grid}</button><button aria-label="Разметка">${I.layout}</button><button aria-label="Страничный">${I.breaks}</button></div><span class="z">100%</span>
<button class="c" aria-label="Уменьшить"><svg width="7" height="7"><path d="M0 3.500h7" stroke="#333"/></svg></button><input type="range" aria-label="Масштаб" value="50"><button class="c" aria-label="Увеличить"><svg width="7" height="7"><path d="M0 3.500h7M3.500 0v7" stroke="#333"/></svg></button><i class="r"></i>`);

define('xl-menu',`<style>${base}:host{display:block;background:#fff;border:1px solid #a5adb6;border-radius:2px;box-shadow:3px 3px 4px rgba(60,60,100,.25);padding:1px 1px 1px 0}
:host(:not([flat])){background:linear-gradient(90deg,#fff 25px,#dfe3e8 25px,#dfe3e8 26px,#fff 26px)}:host([flat]){padding-bottom:2px}</style><slot></slot>`);
define('xl-item',`<style>${base}:host{display:block}button{display:grid;grid-template-columns:34px 1fr 15px;width:100%;height:22px;align-items:center;text-align:left;white-space:nowrap}
.i{padding-left:5px}.a svg{display:none}:host([arrow]) .a svg{display:block}
:host([hot]) button{background:linear-gradient(#fff8dc,#ffe9a0 45%,#fbd660 50%,#ffe89a);box-shadow:inset 0 0 0 1px #e3bb52;border-radius:2px}:host([hot]) .a{border-left:1px solid #e0bd62;height:18px;display:grid;place-items:center}</style>
<button type="button"><span class="i"></span><span><slot></slot></span><span class="a"><svg width="5" height="8" viewBox="0 0 5 8"><path d="M0 0v8l4.500-4z" fill="#777"/></svg></span></button>`,(el,r)=>{const n=el.getAttribute('icon');if(n)r.querySelector('.i').innerHTML=I[n]});
define('xl-heading',`<style>${base}:host{display:grid;grid-template-columns:27px 1fr;height:18px;align-items:center;font-weight:bold;white-space:nowrap;color:#333}
.i{padding-left:5px}.h{background:#eef1f5;height:18px;line-height:18px;padding-left:7px}:host([flat]) .i{display:none}:host([flat]) .h{grid-column:1/-1}</style><span class="i"></span><span class="h"><slot></slot></span>`,(el,r)=>{const n=el.getAttribute('icon');if(n)r.querySelector('.i').innerHTML=I[n]});
define('xl-gallery',`<style>${base}:host{display:flex;height:30px}:host([gutter]){padding-left:27px}button{width:30px;height:30px;display:grid;place-items:center}</style>`,(el,r)=>{
  for(const n of el.getAttribute('icons').split(' ')){const b=document.createElement('button');b.type='button';b.setAttribute('aria-label',n);b.innerHTML=I[n];r.append(b)}});
define('xl-rule',`<style>:host{display:block;height:4px;margin-left:34px;background:repeating-linear-gradient(90deg,#c3c8ce 0 3px,transparent 3px 5px) 0 1px/100% 1px no-repeat}
:host([blank]){background:none}:host([line]){height:1px;margin:0;background:#dfe3e8}</style>`);

define('xl-mini',`<style>${base}:host{display:grid;grid-template-rows:24px 24px;align-items:center;background:#fff;border:1px solid #a5adb6;border-radius:3px;box-shadow:3px 3px 4px rgba(60,60,100,.25);padding:1px 1px 0 0}
div{display:flex;align-items:center}b{font:bold 15px "Liberation Serif",serif;color:#222}span{font-size:12px;color:#222}
</style><div><xl-combo label="Шрифт" value="Calibri" style="width:63px"></xl-combo><xl-combo label="Размер" value="11" style="width:39px;--edge:0"></xl-combo><xl-tool icon="big" label="Увеличить размер"></xl-tool><xl-tool icon="small" label="Уменьшить размер"></xl-tool><xl-tool icon="money" label="Денежный"></xl-tool><xl-tool drop></xl-tool><xl-tool><span>%</span></xl-tool><xl-tool><span>000</span></xl-tool><xl-tool icon="merge" label="Объединить"></xl-tool></div>
<div><xl-tool><b>Ж</b></xl-tool><xl-tool><b style="font-style:italic">К</b></xl-tool><xl-tool icon="alCen" label="По центру"></xl-tool><xl-tool icon="fill" label="Заливка"></xl-tool><xl-tool drop></xl-tool><xl-tool icon="color" label="Цвет текста"></xl-tool><xl-tool drop></xl-tool><xl-tool icon="border" label="Границы"></xl-tool><xl-tool drop></xl-tool><xl-tool icon="dec1" label="Увеличить разрядность"></xl-tool><xl-tool icon="dec2" label="Уменьшить разрядность"></xl-tool><xl-tool icon="brush" label="Формат по образцу"></xl-tool></div>`);

define('xl-callout',`<style>:host{box-sizing:border-box;border:5px solid #f80000;border-radius:14px;box-shadow:3px 4px 5px rgba(0,0,0,.5),inset 3px 3px 4px rgba(0,0,0,.45);pointer-events:none}:host([round]){border-radius:11px}</style>`);
define('xl-badge',`<style>:host{box-sizing:border-box;width:42px;height:42px;border-radius:50%;display:grid;place-items:center;background:radial-gradient(circle at 38% 25%,#ff9d62,#fb5a26 50%,#ee3a10);border:1px solid #a8452c;box-shadow:1px 2px 3px rgba(0,0,0,.35);
font:bold 20px "DejaVu Sans",sans-serif;color:#fff;-webkit-text-stroke:3px #4a3a36;paint-order:stroke fill}:host([small]){width:40px;height:40px;font-size:18px}</style><span><slot></slot></span>`);
define('xl-watermark',`<style>:host{display:grid;grid-template-columns:repeat(3,290px);grid-auto-rows:119px;padding-left:28px;overflow:hidden;pointer-events:none;align-items:end}
span{margin-bottom:14px;font:italic bold 23px/24px "Liberation Serif",serif;color:#7f90dc;opacity:.32;transform:rotate(-19deg);transform-origin:left bottom;white-space:nowrap}</style>`,(el,r)=>{
  for(let i=0;i<18;i++){const s=document.createElement('span');s.textContent='Soringperepair.Com';r.append(s)}});
</script>
</body>
</html>
